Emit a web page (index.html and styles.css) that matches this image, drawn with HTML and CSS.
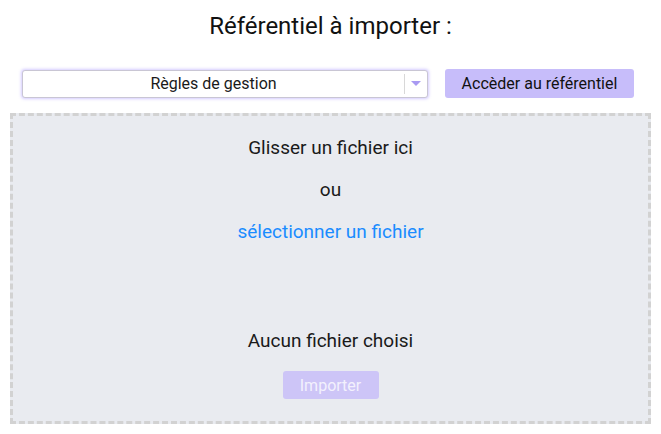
FILE: index.html
```html
<!DOCTYPE html>
<html lang="fr">
<head>
<meta charset="utf-8">
<link rel="stylesheet" href="styles.css">
</head>
<body>
<div class="page">
  <h1 class="title">Référentiel à importer :</h1>
  <div class="toolbar">
    <div class="select">
      <span class="select-value">Règles de gestion</span>
      <span class="select-arrow"><span class="tri"></span></span>
    </div>
    <button class="btn btn-primary">Accèder au référentiel</button>
  </div>
  <div class="dropzone">
    <p class="dz-text">Glisser un fichier ici</p>
    <p class="dz-or">ou</p>
    <p class="dz-link">sélectionner un fichier</p>
    <p class="dz-none">Aucun fichier choisi</p>
    <button class="btn btn-disabled">Importer</button>
  </div>
</div>
</body>
</html>
```
FILE: styles.css
```css
* { box-sizing: border-box; }
html, body { margin: 0; padding: 0; background: #fff; }
body { font-family: Roboto, "Liberation Sans", sans-serif; color: #1a1a1a; }
.page { width: 661px; height: 434px; padding: 12px 10px 0 10px; display: flex; flex-direction: column; }
.title { margin: 0; font-size: 24px; font-weight: 400; text-align: center; line-height: 28px; height: 28px; color: #111; }
.toolbar { display: flex; align-items: center; margin-top: 29px; padding-left: 12px; gap: 17px; }
.select { width: 406px; height: 28px; background: #fff; border: 1px solid #c9c6d4; border-radius: 3px; box-shadow: 0 0 3px 1px rgba(160,140,255,0.45); display: flex; align-items: center; }
.select-value { flex: 1; text-align: center; font-size: 16px; color: #1a1a1a; }
.select-arrow { width: 23px; height: 20px; border-left: 1px solid #d8d8d8; display: flex; align-items: center; justify-content: center; }
.tri { width: 0; height: 0; border-left: 5px solid transparent; border-right: 5px solid transparent; border-top: 5px solid #a99af2; }
.btn { font-family: Roboto, "Liberation Sans", sans-serif; border: none; border-radius: 3px; font-size: 16px; cursor: pointer; padding: 0; }
.btn-primary { width: 189px; height: 29px; background: #c7bdfa; color: #111; }
.dropzone { margin-top: 15px; height: 311px; background: #e9ebf0; border: 3px dashed #d2d2d2; display: flex; flex-direction: column; align-items: center; }
.dropzone p { margin: 0; font-size: 19px; line-height: 22px; }
.dz-text { margin-top: 21px !important; }
.dz-or { margin-top: 20px !important; }
.dz-link { margin-top: 20px !important; color: #1a8cff; }
.dz-none { margin-top: 87px !important; }
.btn-disabled { margin-top: 19px; width: 96px; height: 28px; background: #cdc5f7; color: #f3f1fd; font-size: 16px; }
```
